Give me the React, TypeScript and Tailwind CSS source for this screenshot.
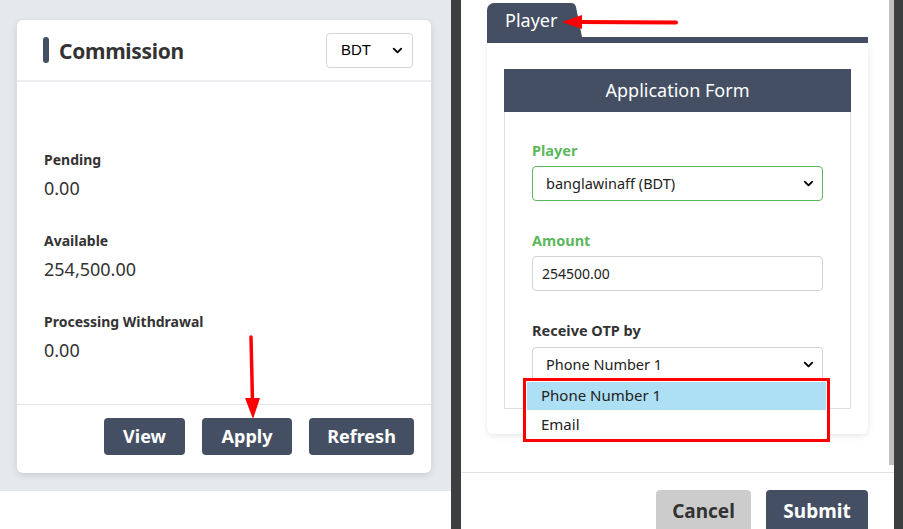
import { ChevronDown } from "lucide-react";

const slate = "bg-[#454f63]";

function Stat({ label, value }: { label: string; value: string }) {
  return (
    <div className="mb-[31px]">
      <div className="text-[14px] leading-[20px] font-bold text-[#333]">{label}</div>
      <div className="mt-[6px] text-[18px] leading-[24px] text-[#333]">{value}</div>
    </div>
  );
}

function FakeSelect({ value, className }: { value: string; className: string }) {
  return (
    <div className={`flex items-center justify-between rounded-[4px] border bg-white ${className}`}>
      <span>{value}</span>
      <ChevronDown className="h-[15px] w-[15px] text-black" strokeWidth={3} />
    </div>
  );
}

function CommissionCard() {
  return (
    <div className="w-[414px] h-[453px] rounded-[6px] bg-white shadow-[0_2px_6px_rgba(0,0,0,0.12)] flex flex-col">
      <div className="h-[62px] shrink-0 flex items-center border-b-2 border-[#eceef1] pl-[26px] pr-[18px]">
        <div className={`h-[26px] w-[6px] rounded-full ${slate}`} />
        <h2 className="ml-[10px] mt-[3px] text-[21px] font-bold text-[#333] tracking-[-0.3px]">Commission</h2>
        <FakeSelect
          value="BDT"
          className="ml-auto mt-[1px] h-[35px] w-[87px] border-[#d6d6d6] pl-[14px] pr-[7px] text-[15px] text-black font-['Liberation_Sans',sans-serif]"
        />
      </div>
      <div className="flex-1 pl-[27px] pt-[68px]">
        <Stat label="Pending" value="0.00" />
        <Stat label="Available" value="254,500.00" />
        <Stat label="Processing Withdrawal" value="0.00" />
      </div>
      <div className="h-[69px] shrink-0 border-t border-[#e3e5e8] flex justify-end gap-[17px] pr-[17px] pt-[13px]">
        {["View", "Apply", "Refresh"].map((b) => (
          <button
            key={b}
            className={`h-[37px] rounded-[4px] ${slate} text-white text-[18px] font-bold ${
              b === "View" ? "w-[81px]" : b === "Apply" ? "w-[90px]" : "w-[105px]"
            }`}
          >
            {b}
          </button>
        ))}
      </div>
    </div>
  );
}

function ApplicationForm() {
  return (
    <div className="w-[347px]">
      <div className={`h-[43px] ${slate} flex items-center justify-center text-white text-[18px]`}>
        Application Form
      </div>
      <div className="h-[297px] border border-t-0 border-[#dedede] px-[27px] pt-[28px]">
        <div className="text-[14.5px] leading-[20px] font-bold text-[#5cb85c]">Player</div>
        <FakeSelect
          value="banglawinaff (BDT)"
          className="mt-[6px] h-[35px] border-[#5cb85c] pl-[13px] pr-[6px] text-[14.5px] text-[#222]"
        />
        <div className="mt-[29px] text-[14.5px] leading-[20px] font-bold text-[#5cb85c]">Amount</div>
        <div className="mt-[6px] h-[35px] rounded-[4px] border border-[#d3d3d3] flex items-center pl-[9px] text-[14px] text-[#222]">
          254500.00
        </div>
        <div className="mt-[29px] text-[14.5px] leading-[20px] font-bold text-[#333]">Receive OTP by</div>
        <FakeSelect
          value="Phone Number 1"
          className="mt-[7px] h-[35px] border-[#d3d3d3] pl-[13px] pr-[6px] text-[14.5px] text-[#222]"
        />
      </div>
    </div>
  );
}

export default function App() {
  return (
    <div className="relative flex h-[529px] w-[903px] overflow-hidden bg-white font-['Noto_Sans',sans-serif]">
      {/* left page */}
      <div className="w-[451px] shrink-0 flex flex-col">
        <div className="h-[491px] shrink-0 bg-[#e5e9ec] pl-[17px] pt-[20px]">
          <CommissionCard />
        </div>
        <div className="flex-1 bg-white" />
      </div>
      <div className="w-[10px] shrink-0 bg-[#3b3f3f]" />

      {/* modal */}
      <div className="w-[433px] shrink-0 flex flex-col bg-white">
        <div className="h-[472px] shrink-0 flex">
          <div className="flex-1 pl-[26px] pt-[3px]">
            <div className="flex h-[34px]">
              <div className={`w-[81px] rounded-tl-[7px] ${slate} pl-[18px] text-white text-[18px] leading-[34px]`}>
                Player
              </div>
              <svg width="14" height="34" viewBox="0 0 14 34">
                <path d="M0 0 H3 Q7 0 8 4 L14 34 H0 Z" fill="#454f63" />
              </svg>
            </div>
            <div className={`h-[6px] w-[381px] ${slate}`} />
            <div className="w-[381px] h-[391px] rounded-b-[6px] bg-white shadow-[0_2px_6px_rgba(0,0,0,0.1)] pl-[17px] pt-[26px]">
              <ApplicationForm />
            </div>
          </div>
          <div className="w-[5px] h-[465px] bg-[#c1c1c1]" />
        </div>
        <div className="flex-1 border-t border-[#e3e3e3] flex justify-end gap-[15px] pr-[26px] pt-[17px]">
          <button className="h-[42px] w-[95px] shrink-0 rounded-[4px] bg-[#cccccc] text-[#333] text-[19px] font-bold">Cancel</button>
          <button className={`h-[42px] w-[102px] shrink-0 rounded-[4px] ${slate} text-white text-[19px] font-bold`}>Submit</button>
        </div>
      </div>
      <div className="flex-1 bg-[#3b3f3f]" />

      {/* open dropdown list */}
      <div className="absolute left-[523px] top-[378px] w-[307px] border-[3px] border-[#ff0000] bg-white p-[1px] text-[15px] text-[#222]">
        <div className="h-[28px] bg-[#addff5] pl-[14px] leading-[27px]">Phone Number 1</div>
        <div className="h-[28px] pl-[14px] leading-[29px]">Email</div>
      </div>

      {/* annotation arrows */}
      <svg className="absolute left-[240px] top-[334px]" width="24" height="86" viewBox="0 0 24 86">
        <line x1="11" y1="3" x2="12.5" y2="68" stroke="#ff0000" strokeWidth="3.5" strokeLinecap="round" />
        <polygon points="5,64 20,64 13,85" fill="#ff0000" />
      </svg>
      <svg className="absolute left-[558px] top-[12px]" width="124" height="20" viewBox="0 0 124 20">
        <line x1="20" y1="10" x2="118" y2="10.5" stroke="#ff0000" strokeWidth="4" strokeLinecap="round" />
        <polygon points="4,10 24,3 24,17" fill="#ff0000" />
      </svg>
    </div>
  );
}
